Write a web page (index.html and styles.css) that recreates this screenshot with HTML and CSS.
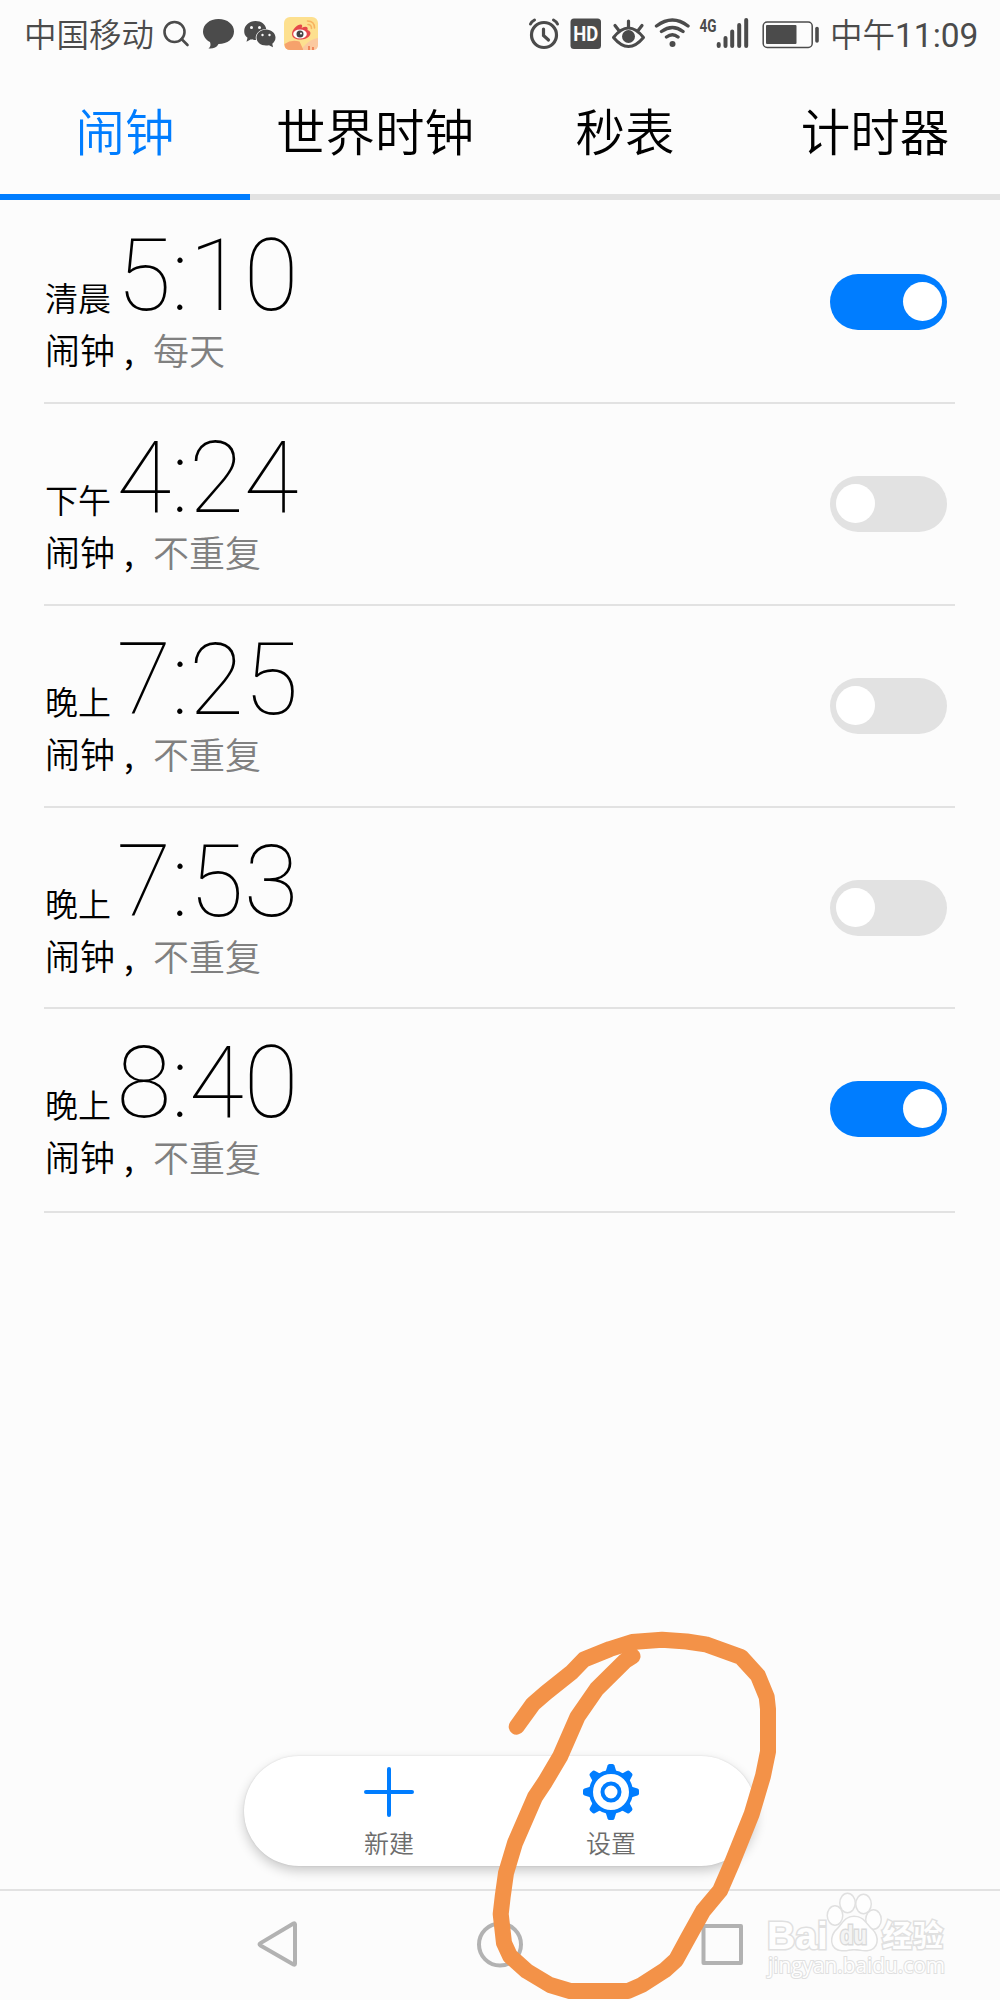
FILE: index.html
```html
<!DOCTYPE html>
<html lang="zh-CN">
<head>
<meta charset="utf-8">
<title>闹钟</title>
<link rel="stylesheet" href="styles.css">
</head>
<body>
<div class="screen">
  <header class="status">
    <span class="carrier">中国移动</span>
    <svg class="status-left" width="180" height="40" viewBox="160 14 180 40">
      <g fill="none" stroke="#4b4b4b" stroke-width="2.600"><circle cx="174.500" cy="32" r="10"/><path d="M181.500 39l6 6" stroke-linecap="round"/></g>
      <g fill="#4b4b4b">
        <path d="M218.500 19c9 0 15.500 5.500 15.500 12.500S227.500 44 218.500 44c-2 4-6 5-10 4.500 2-1.500 2.500-3.500 1.500-6.500-4-2-7-6-7-10.500C203 24.500 209.500 19 218.500 19z"/>
        <path d="M255.500 21c6 0 10 3.500 10.700 8-6 0-10.500 4-10.500 9l.3 2c-2 0-3.500-.2-5-.8l-4.500 2.500 1-4c-2.600-1.900-3.300-4-3.300-6.700 0-5.500 5-10 11.300-10z"/>
        <path d="M266 29.500c5.500 0 9.500 3.800 9.500 8 0 2.700-1.300 4.600-3.200 6.200l.7 3.500-4-2c-7 1.500-12.500-2.500-12.500-7.700 0-4.300 4.200-8 9.500-8z"/>
      </g>
      <g fill="#fcfcfc"><circle cx="251.500" cy="27.500" r="1.500"/><circle cx="259.500" cy="27.500" r="1.500"/><circle cx="262.500" cy="35" r="1.200"/><circle cx="269.500" cy="35" r="1.200"/></g>
      <rect x="284" y="17" width="34" height="33" rx="6" fill="#fde08f"/>
      <path d="M284.500 44q7-5 15-2.500l4 8.500h-13q-6 0-6-6z" fill="#f6a26c"/>
      <path d="M303 47q7-8 15-9v7q0 5-5 5h-10z" fill="#fbc9a0"/>
      <path d="M309 50v-4M313 50v-3" stroke="#ef8056" stroke-width="1.800"/>
      <path d="M292 34c0-5 6-10 9-9.500 2 .6 1 3 .5 3.500 4-2 7-1.500 6 2 3 1 3.500 3 2.500 5-3 6-18 6.500-18-1z" fill="#e5484a"/>
      <ellipse cx="300" cy="34" rx="6.800" ry="4.600" fill="#fff"/><circle cx="300" cy="34" r="3.500" fill="#444"/><circle cx="301" cy="33.500" r="1" fill="#fff"/>
      <path d="M308 24.500q3.500 0 3.500 4M307.500 21q7 0 7 7" fill="none" stroke="#f7b360" stroke-width="1.600" stroke-linecap="round"/>
    </svg>
    <svg class="status-right" width="294" height="40" viewBox="526 14 294 40">
      <g fill="none" stroke="#4b4b4b" stroke-linecap="round">
        <circle cx="544" cy="35" r="12.500" stroke-width="3.200"/><path d="M543.500 29v6.500l5 4.500" stroke-width="3.200"/>
        <path d="M530.500 24q1-2.500 4-4M557.500 24q-1-2.500-4-4" stroke-width="3"/>
        <path d="M613.500 37.500q15-19 30 0q-15 18-30 0z" stroke-width="3" stroke-linejoin="round"/>
        <path d="M628.500 21v6M615 25.500l3.500 4.500M642 25.500l-3.500 4.500" stroke-width="3.200"/>
        <path d="M656.500 26q16-12 31.500 0M661.500 31.500q11-8 21.500 0M666.500 37q6-4.500 11.500 0" stroke-width="3.400"/>
      </g>
      <rect x="570.500" y="18.500" width="30.500" height="30.500" rx="3.500" fill="#4b4b4b"/>
      <text x="585.700" y="40.500" class="hd" textLength="25" lengthAdjust="spacingAndGlyphs">HD</text>
      <circle cx="628.500" cy="36.500" r="6.500" fill="#4b4b4b"/>
      <circle cx="672.500" cy="44" r="3" fill="#4b4b4b"/>
      <text x="699.500" y="31.500" class="net" textLength="17" lengthAdjust="spacingAndGlyphs">4G</text>
      <path d="M718.700 44v2M725.500 38v8M732.200 31.500v14.500M739.200 25v21M746.200 20v26" stroke="#4b4b4b" stroke-width="4" stroke-linecap="round"/>
      <rect x="763.200" y="22" width="49" height="25.500" rx="4" fill="none" stroke="#4b4b4b" stroke-width="1.500"/>
      <rect x="766" y="25" width="30.500" height="19" rx="1" fill="#4b4b4b"/>
      <path d="M817 28.500v12.500" stroke="#4b4b4b" stroke-width="3.600" stroke-linecap="round"/>
    </svg>
    <span class="clock">中午<span class="clock-digits">11:09</span></span>
  </header>

  <nav class="tabs">
    <span class="tab tab-active">闹钟</span>
    <span class="tab">世界时钟</span>
    <span class="tab">秒表</span>
    <span class="tab">计时器</span>
  </nav>

  <main class="alarms">
    <section class="alarm"><div><div class="time"><span class="period">清晨</span><span class="digits">5:10</span></div><div class="note"><span class="name">闹钟</span><span class="comma">,</span><span class="repeat">每天</span></div></div><span class="switch on"></span></section>
    <section class="alarm"><div><div class="time"><span class="period">下午</span><span class="digits">4:24</span></div><div class="note"><span class="name">闹钟</span><span class="comma">,</span><span class="repeat">不重复</span></div></div><span class="switch"></span></section>
    <section class="alarm"><div><div class="time"><span class="period">晚上</span><span class="digits">7:25</span></div><div class="note"><span class="name">闹钟</span><span class="comma">,</span><span class="repeat">不重复</span></div></div><span class="switch"></span></section>
    <section class="alarm"><div><div class="time"><span class="period">晚上</span><span class="digits">7:53</span></div><div class="note"><span class="name">闹钟</span><span class="comma">,</span><span class="repeat">不重复</span></div></div><span class="switch"></span></section>
    <section class="alarm"><div><div class="time"><span class="period">晚上</span><span class="digits">8:40</span></div><div class="note"><span class="name">闹钟</span><span class="comma">,</span><span class="repeat">不重复</span></div></div><span class="switch on"></span></section>
  </main>

  <div class="actions">
    <div class="action">
      <svg width="60" height="60" viewBox="-30 -30 60 60"><path d="M-23 0h46M0-23v46" stroke="#007dff" stroke-width="4" stroke-linecap="round"/></svg>
      <span>新建</span>
    </div>
    <div class="action">
      <svg width="60" height="60" viewBox="-30 -30 60 60">
        <defs><path id="tooth" d="M-5.500-20L-3.500-26.500Q-3-28-1.500-28H1.500Q3-28 3.500-26.500L5.500-20z"/></defs>
        <g fill="#007dff"><use href="#tooth"/><use href="#tooth" transform="rotate(45)"/><use href="#tooth" transform="rotate(90)"/><use href="#tooth" transform="rotate(135)"/><use href="#tooth" transform="rotate(180)"/><use href="#tooth" transform="rotate(225)"/><use href="#tooth" transform="rotate(270)"/><use href="#tooth" transform="rotate(315)"/></g>
        <g fill="none" stroke="#007dff" stroke-width="4"><circle r="20"/><circle r="8.500"/></g>
      </svg>
      <span>设置</span>
    </div>
  </div>

  <footer class="navbar">
    <svg width="1000" height="109" viewBox="0 1891 1000 109">
      <g fill="none" stroke="#b2b2b2" stroke-width="4" stroke-linejoin="round">
        <path d="M293.500 1923.500q1.500-.8 1.500 1v39q0 1.800-1.500 1L260.500 1945.500q-2-1.200 0-2.400z"/><circle cx="500" cy="1944.500" r="21"/><rect x="703.500" y="1926" width="37.500" height="37"/>
      </g>
      <g class="mark">
        <text x="767" y="1948.500" class="mark-bai" textLength="61" lengthAdjust="spacingAndGlyphs">Bai</text>
        <ellipse cx="835" cy="1915.500" rx="7" ry="9"/><ellipse cx="847.500" cy="1903" rx="7" ry="9"/><ellipse cx="863.500" cy="1904" rx="7" ry="9"/><ellipse cx="873.500" cy="1919.500" rx="7" ry="9"/>
        <path d="M854 1917c-9 0-11 7-16 12-8 7-8 20 4 21 6 .5 6-1 12-1s8 1.500 13 1c11-1 12-13 5-20-6-5-8-13-18-13z"/>
        <text x="840" y="1944" class="mark-du" textLength="27" lengthAdjust="spacingAndGlyphs">du</text>
        <text x="882" y="1946" class="mark-cn" textLength="61">经验</text>
        <text x="768" y="1973" class="mark-url" textLength="177" lengthAdjust="spacingAndGlyphs">jingyan.baidu.com</text>
      </g>
    </svg>
  </footer>

  <svg class="scribble" width="1000" height="2000" viewBox="0 0 1000 2000">
    <path d="M516.700 1726.700L533 1704 546 1692.700 571.700 1672.300 584 1659.500 610 1649 632 1642 662 1639.700 686.700 1641.500 705.700 1644.300 741 1657 758 1675.700 766.700 1697 768 1709V1751.700L763 1776 751.700 1814 732 1863 720 1890.700 703 1911 688 1938 676 1960 665 1970 641.700 1985 628 1991H570L550 1985 526.700 1971 510 1956 504 1943 500.700 1914 502.700 1896.700 506 1873 515 1843 535 1797 545 1782 560 1756.700 577.500 1716.700 596.700 1689 625 1661 632.500 1656.300"/>
  </svg>
</div>
</body>
</html>
```
FILE: styles.css
```css
* { box-sizing: border-box; }
body { margin: 0; background: #fcfcfc; color: #000; font-family: "Noto Sans CJK SC", sans-serif; font-weight: 350; }
.screen { position: relative; width: 1000px; height: 2000px; overflow: hidden; display: flex; flex-direction: column; background: #fcfcfc; }

.status { height: 70px; display: flex; align-items: flex-start; color: #4b4b4b; font-size: 32.5px; line-height: 38px; padding: 14px 0 0 24px; }
.carrier { width: 136px; white-space: nowrap; }
.status-right { margin-left: 186px; }
.clock { margin-left: 10px; white-space: nowrap; }
.clock-digits { font-family: Roboto, sans-serif; font-size: 33.500px; font-weight: 400; }
.hd { font: 700 21px Roboto, sans-serif; fill: #fcfcfc; text-anchor: middle; }
.net { font: 700 18px Roboto, sans-serif; fill: #4b4b4b; }

.tabs { height: 130px; display: grid; grid-template-columns: repeat(4, 1fr); }
.tab { border-bottom: 6px solid #e2e2e2; font-size: 49.500px; line-height: 120px; height: 130px; text-align: center; white-space: nowrap; }
.tab-active { color: #007dff; border-color: #007dff; }

.alarms { padding: 2px 45px 0 44px; }
.alarm { height: 201.850px; display: flex; justify-content: space-between; border-bottom: 2px solid #e2e2e2; padding: 21px 8px 0 0; }
.alarm:last-child { height: 203.600px; }
.time { display: flex; align-items: baseline; height: 103px; line-height: 106px; }
.period { width: 72.500px; padding-left: 1px; font-size: 33px; position: relative; top: 1px; }
.digits { font-family: Roboto, sans-serif; font-weight: 100; font-size: 100px; }
.note { display: flex; line-height: 46px; height: 46px; font-size: 35px; }
.name { width: 80px; padding-left: 1px; }
.comma { width: 29px; font-weight: 400; }
.repeat { color: #808080; font-size: 36px; }
.switch { display: flex; width: 117px; height: 56px; border-radius: 28px; margin-top: 51px; padding: 8px 5.500px; background: #e2e2e2; }
.switch::before { content: ""; width: 39px; height: 39px; border-radius: 50%; background: #fff; }
.on { background: #007dff; justify-content: flex-end; }

.actions { margin: auto auto 23px; width: 512px; height: 110px; border-radius: 55px; background: #fff; box-shadow: 0 5px 12px rgba(0,0,0,.2), 0 0 2px rgba(0,0,0,.12); display: flex; justify-content: space-between; padding: 5.500px 100px 0; }
.action { width: 90px; display: flex; flex-direction: column; align-items: center; color: #6c6c6c; font-size: 25px; line-height: 42px; }
.action span { margin-top: -1px; }
.navbar { height: 111px; border-top: 2px solid #e2e2e2; }
.navbar svg { display: block; }
.mark { fill: #fefefe; stroke: #e0e0e0; stroke-width: 3px; paint-order: stroke; }
.mark-bai { font: 700 39px "Liberation Sans", sans-serif; }
.mark-du { font: 700 25px "Liberation Sans", sans-serif; fill: #f4f4f4; stroke: #dadada; }
.mark-cn { font: 700 30px "Noto Sans CJK SC", sans-serif; }
.mark-url { font: 400 21px "Open Sans", sans-serif; stroke-width: 2px; }
.scribble { position: absolute; left: 0; top: 0; }
.scribble path { fill: none; stroke: #f39248; stroke-width: 16px; stroke-linecap: round; stroke-linejoin: round; }
```
